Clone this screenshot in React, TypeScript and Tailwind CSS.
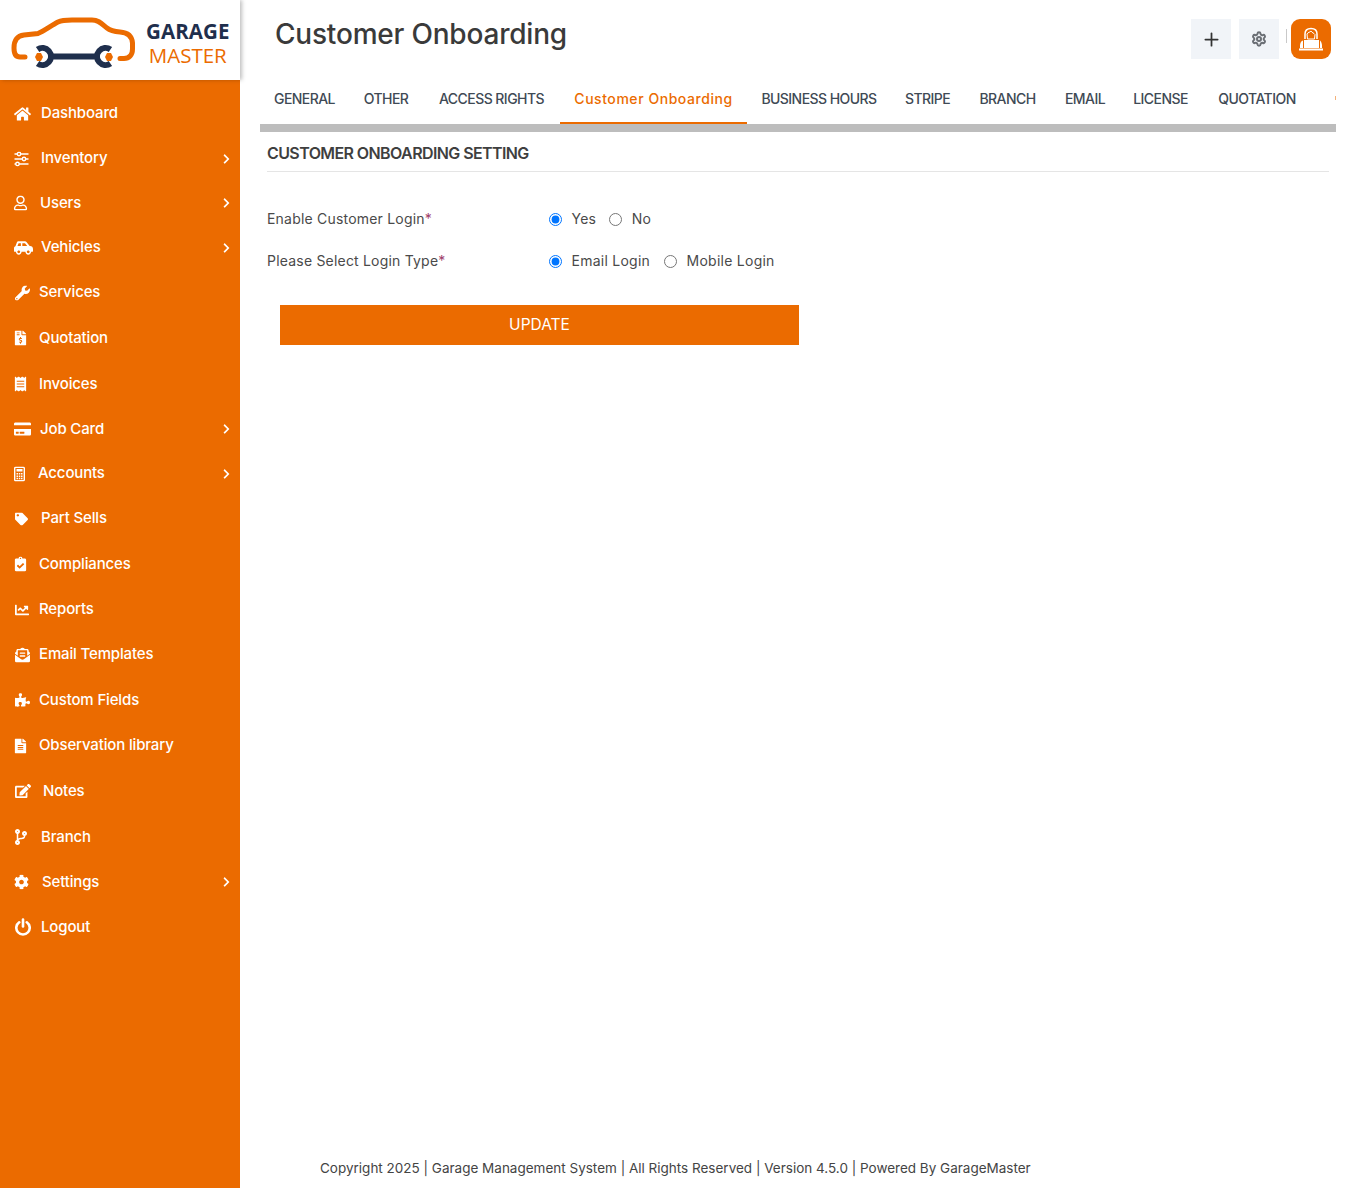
import { FaHome, FaRegUser, FaCarSide, FaWrench, FaFileInvoiceDollar, FaReceipt, FaCreditCard, FaTag, FaClipboardCheck, FaChartLine, FaEnvelopeOpenText, FaPuzzlePiece, FaFileAlt, FaEdit, FaCodeBranch, FaCog, FaChevronRight } from "react-icons/fa";
import { Plus, Settings } from "lucide-react";
import type { ReactNode } from "react";

type Item = { label: string; icon: ReactNode; h: string; ml: string; ix?: string; arrow?: boolean };

const SlidersIcon = () => (
  <svg width="15" height="15" viewBox="0 0 15 15" fill="none" stroke="#fff" strokeWidth="1.4">
    <path d="M0.500 2.500H14.500M0.500 7.500H14.500M0.500 12.500H14.500" />
    <circle cx="5" cy="2.500" r="1.700" fill="#eb6b00" />
    <circle cx="10" cy="7.500" r="1.700" fill="#eb6b00" />
    <circle cx="3.500" cy="12.500" r="1.700" fill="#eb6b00" />
  </svg>
);

const CalculatorIcon = () => (
  <svg width="11" height="15" viewBox="0 0 11 15" fill="none">
    <rect x="0.700" y="0.700" width="9.600" height="13.600" rx="1" stroke="#fff" strokeWidth="1.400" />
    <rect x="2.500" y="2.500" width="6" height="2.500" fill="#fff" />
    <path d="M2.500 6.500h1.500v1.500h-1.500zM4.800 6.500h1.500v1.500h-1.500zM7 6.500h1.500v1.500h-1.500zM2.500 9h1.500v1.500h-1.500zM4.800 9h1.500v1.500h-1.500zM7 9h1.500v1.500h-1.500zM2.500 11.200h1.500v1.500h-1.500zM4.800 11.200h1.500v1.500h-1.500zM7 11.200h1.500v1.500h-1.500z" fill="#fff" />
  </svg>
);

const PowerIcon = () => (
  <svg width="16" height="18" viewBox="0 0 16 18" fill="none" stroke="#fff" strokeWidth="2.600" strokeLinecap="round">
    <path d="M8 1.500V8.500" />
    <path d="M4.200 4.300 A6.700 6.700 0 1 0 11.800 4.300" />
  </svg>
);

const items: Item[] = [
  { label: "Dashboard", icon: <FaHome size={17} />, h: "h-[45px]", ml: "ml-[41px]" },
  { label: "Inventory", icon: <SlidersIcon />, h: "h-[45px]", ml: "ml-[41px]", arrow: true },
  { label: "Users", icon: <FaRegUser size={15} />, h: "h-[44px]", ml: "ml-[40px]", ix: "-ml-[1px]", arrow: true },
  { label: "Vehicles", icon: <FaCarSide size={19} />, h: "h-[45px]", ml: "ml-[41px]", arrow: true },
  { label: "Services", icon: <FaWrench size={15} />, h: "h-[45px]", ml: "ml-[39px]", ix: "ml-[1px]" },
  { label: "Quotation", icon: <FaFileInvoiceDollar size={15} />, h: "h-[46px]", ml: "ml-[39px]", ix: "-ml-[1px]" },
  { label: "Invoices", icon: <FaReceipt size={15} />, h: "h-[46px]", ml: "ml-[39px]", ix: "-ml-[1px]" },
  { label: "Job Card", icon: <FaCreditCard size={17} />, h: "h-[44px]", ml: "ml-[40px]", arrow: true },
  { label: "Accounts", icon: <CalculatorIcon />, h: "h-[45px]", ml: "ml-[38px]", arrow: true },
  { label: "Part Sells", icon: <FaTag size={13} />, h: "h-[45px]", ml: "ml-[41px]", ix: "ml-[1px]" },
  { label: "Compliances", icon: <FaClipboardCheck size={15} />, h: "h-[46px]", ml: "ml-[39px]", ix: "-ml-[1px]" },
  { label: "Reports", icon: <FaChartLine size={14} />, h: "h-[45px]", ml: "ml-[39px]", ix: "ml-[1px]" },
  { label: "Email Templates", icon: <FaEnvelopeOpenText size={15} />, h: "h-[45px]", ml: "ml-[39px]", ix: "ml-[1px]" },
  { label: "Custom Fields", icon: <FaPuzzlePiece size={15} />, h: "h-[46px]", ml: "ml-[39px]", ix: "ml-[1px]" },
  { label: "Observation library", icon: <FaFileAlt size={15} />, h: "h-[45px]", ml: "ml-[39px]", ix: "-ml-[1px]" },
  { label: "Notes", icon: <FaEdit size={16} />, h: "h-[46px]", ml: "ml-[43px]", ix: "ml-[1px]" },
  { label: "Branch", icon: <FaCodeBranch size={16} />, h: "h-[46px]", ml: "ml-[41px]", ix: "-ml-[1px]" },
  { label: "Settings", icon: <FaCog size={15} />, h: "h-[44px]", ml: "ml-[42px]", arrow: true },
  { label: "Logout", icon: <PowerIcon />, h: "h-[46px]", ml: "ml-[41px]", ix: "ml-[1px]" },
];

const tabs = [
  { label: "GENERAL", w: "w-[89px]" },
  { label: "OTHER", w: "w-[74px]" },
  { label: "ACCESS RIGHTS", w: "w-[137px]" },
  { label: "Customer Onboarding", w: "w-[187px]", active: true },
  { label: "BUSINESS HOURS", w: "w-[144px]" },
  { label: "STRIPE", w: "w-[73px]" },
  { label: "BRANCH", w: "w-[87px]" },
  { label: "EMAIL", w: "w-[68px]" },
  { label: "LICENSE", w: "w-[83px]" },
  { label: "QUOTATION", w: "w-[110px]" },
];

function Logo() {
  return (
    <div className="relative z-10 flex h-[80px] w-[240px] items-center bg-white shadow-[2px_0_4px_rgba(0,0,0,0.25)]">
      <svg width="146" height="80" viewBox="0 0 146 80" className="shrink-0" fill="none">
        <path d="M25 57 H20 C15 57 14 52 14 48 C14 40 17 36 24 35 L38 33.500 C44 31 52 25 58 22 C62 20 66 20 72 20 H92 C99 20 102 24 107 28 C110 30.500 113 31.500 120 32 C127 32.500 132 36 132.500 43 V49 C132.500 55 129 58.500 124 58.500 H120" stroke="#eb6b00" strokeWidth="5" strokeLinecap="round" />
        <path d="M37.600 49.500 A8.500 8.500 0 1 1 37.600 63.500" stroke="#1f2f4d" strokeWidth="6" />
        <path d="M110.400 49.500 A8.500 8.500 0 1 0 110.400 63.500" stroke="#1f2f4d" strokeWidth="6" />
        <rect x="48" y="53.500" width="52" height="6" fill="#1f2f4d" />
        <polygon points="35,57 37,53 41,53 43,57 41,61 37,61" fill="#eb6b00" />
        <polygon points="105,57 107,53 111,53 113,57 111,61 107,61" fill="#eb6b00" />
      </svg>
      <div className="mt-[6px] flex flex-col items-center font-['Open_Sans',sans-serif]">
        <span className="text-[20.5px] leading-[24px] font-bold tracking-[0.1px] text-[#1f2f4d]">GARAGE</span>
        <span className="text-[20.5px] leading-[24px] text-[#eb6b00]">MASTER</span>
      </div>
    </div>
  );
}

function Sidebar() {
  return (
    <aside className="flex w-[240px] shrink-0 flex-col bg-[#eb6b00] text-white">
      <Logo />
      <nav className="flex flex-col pt-[11px]">
        {items.map((it) => (
          <div key={it.label} className={`relative flex items-center ${it.h}`}>
            <span className="absolute left-[14px] top-1/2 flex w-[19px] -translate-y-1/2 items-center justify-start">
              <span className={`flex ${it.ix ?? ""}`}>{it.icon}</span>
            </span>
            <span className={`${it.ml} text-[15px] font-medium tracking-[-0.15px]`}>{it.label}</span>
            {it.arrow && <FaChevronRight size={11} className="absolute right-[8px] top-1/2 -translate-y-1/2" />}
          </div>
        ))}
      </nav>
    </aside>
  );
}

function Avatar() {
  return (
    <div className="flex h-[40px] w-[40px] items-center justify-center rounded-[9px] bg-[#eb6b00]">
      <svg width="40" height="40" viewBox="0 0 40 40" fill="none">
        <path d="M14 20 V15 C14 11 16.500 9.500 20 9.500 C23.500 9.500 26 11 26 15 V20" stroke="#fff" strokeWidth="1.500" />
        <path d="M16 15 C17 13 19 13.500 20 12 C21 14 23 14 24 15.500 L23.500 20 H16.500 Z" stroke="#fff" strokeWidth="1" />
        <rect x="13" y="21" width="15" height="8" fill="#fff" />
        <path d="M9 26 C9.500 23 10.500 22 12 21.500 V29 H9 Z M31 26 C30.500 23 29.500 22 29 21.500 V29 H31 Z" fill="#fff" />
        <rect x="8" y="29.500" width="24" height="2" fill="#fff" />
      </svg>
    </div>
  );
}

function Header() {
  return (
    <header className="flex h-[80px] items-start justify-between pl-[35px] pr-[35px]">
      <h1 className="mt-[16px] text-[28px] leading-[36px] font-medium tracking-[-0.2px] text-[#3a3a3a]">Customer Onboarding</h1>
      <div className="mt-[19px] flex items-center">
        <button className="flex h-[40px] w-[40px] items-center justify-center bg-[#f1f4f8] text-[#333]"><Plus size={21} strokeWidth={2} /></button>
        <button className="ml-[8px] flex h-[40px] w-[40px] items-center justify-center bg-[#f1f4f8] text-[#6b6f75]"><Settings size={16} strokeWidth={3} /></button>
        <span className="ml-[7px] mr-[4px] h-[14px] w-[1px] -translate-y-[3px] bg-[#c9c9c9]" />
        <Avatar />
      </div>
    </header>
  );
}

function Tabs() {
  return (
    <div className="flex h-[44px] w-[1076px] items-stretch overflow-hidden">
      {tabs.map((t) => (
        <div key={t.label} className={`flex shrink-0 items-center justify-center whitespace-nowrap border-b-[2px] pb-[6px] text-[14px] font-medium ${t.w} ${t.active ? "border-[#eb6b00] tracking-[0.55px] text-[#eb6b00]" : "border-transparent tracking-[-0.55px] text-[#3f4a55]"}`}>
          {t.label}
        </div>
      ))}
      <div className="ml-[23px] mt-[16px] h-[4px] w-[1px] bg-[#f3b27a]" />
    </div>
  );
}

function Radio({ label, name, checked }: { label: string; name: string; checked?: boolean }) {
  return (
    <label className="flex items-center">
      <input type="radio" name={name} defaultChecked={checked} className="m-0 h-[13px] w-[13px] accent-[#0075ff]" />
      <span className="mb-[2px] ml-[9.500px] text-[14px] tracking-[0.25px]">{label}</span>
    </label>
  );
}

function Row({ label, children }: { label: string; children: ReactNode }) {
  return (
    <div className="flex h-[42px] items-center text-[14px] text-[#4a4a4a]">
      <span className="mb-[2px] w-[282px] shrink-0 tracking-[0.2px]">{label}<span className="text-[#a0406a]">*</span></span>
      {children}
    </div>
  );
}

export default function App() {
  return (
    <div className="flex min-h-[1188px] w-full bg-white font-['Inter',sans-serif]">
      <Sidebar />
      <main className="flex min-w-0 flex-1 flex-col">
        <Header />
        <div className="pl-[20px]"><Tabs /></div>
        <div className="ml-[20px] h-[8px] w-[1076px] bg-[#bdbdbd]" />
        <section className="ml-[27px] mr-[37px]">
          <h2 className="flex h-[40px] items-center border-b border-[#e5e5e5] pt-[3px] text-[16px] font-semibold tracking-[-0.6px] text-[#3f3f3f]">CUSTOMER ONBOARDING SETTING</h2>
          <div className="mt-[26px] flex flex-col">
            <Row label="Enable Customer Login">
              <Radio label="Yes" name="enable" checked />
              <span className="ml-[13px]"><Radio label="No" name="enable" /></span>
            </Row>
            <Row label="Please Select Login Type">
              <Radio label="Email Login" name="type" checked />
              <span className="ml-[14px]"><Radio label="Mobile Login" name="type" /></span>
            </Row>
          </div>
          <button className="ml-[13px] mt-[23px] flex h-[40px] w-[519px] items-center justify-center bg-[#eb6b00] text-[15.5px] text-white">UPDATE</button>
        </section>
        <footer className="mt-auto flex h-[40px] items-center pl-[80px] text-[13.5px] text-[#444]">
          Copyright 2025 | Garage Management System | All Rights Reserved | Version 4.5.0 | Powered By GarageMaster
        </footer>
      </main>
    </div>
  );
}
